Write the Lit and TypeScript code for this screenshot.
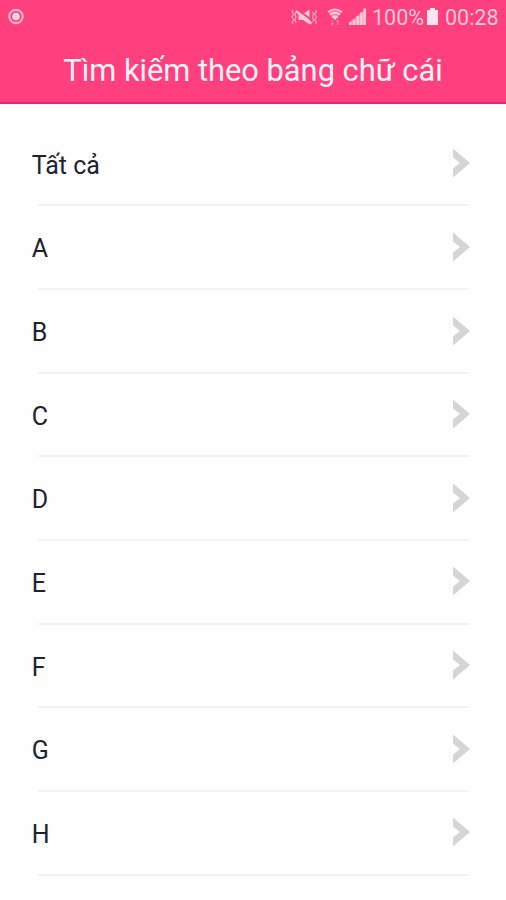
import { LitElement, html, css } from "lit";
import { customElement, property } from "lit/decorators.js";

@customElement("status-bar")
class StatusBar extends LitElement {
  static styles = css`
    :host {
      display: flex;
      align-items: center;
      height: 34px;
      color: #ffc8da;
      font-size: 21.5px;
      line-height: 34px;
    }
    svg { display: block; flex: none; }
    .record { margin-left: 7px; }
    .spacer { flex: 1; }
    .wifi { margin-left: 9px; }
    .signal { margin-left: 5px; }
    .percent { margin-left: 5px; width: 53px; }
    .battery { margin-left: 2px; }
    .clock { margin-left: 7px; width: 61px; }
    .label { display: block; white-space: nowrap; padding-top: 1px; }
  `;
  render() {
    return html`
      <svg class="record" width="18" height="18" viewBox="0 0 18 18">
        <circle cx="9" cy="8.5" r="6.7" fill="none" stroke="#ffb4ce" stroke-width="2.2" />
        <circle cx="9" cy="8.5" r="3.8" fill="#ffd0e0" />
      </svg>
      <div class="spacer"></div>
      <svg width="27" height="18" viewBox="0 0 27 18">
        <path d="M7.5 6H12l6.5-4.5v15L12 12H7.5z" fill="#ffc8da" />
        <path d="M6.5 1.5l14 10.5" stroke="#ff3f7e" stroke-width="1.8" />
        <path d="M5 3l15.5 12.5" stroke="#ffc8da" stroke-width="2.6" />
        <path d="M2 2l-1 2 2 2-2 3 2 3-2 2 1 2M5 4l-1 2 1 3-1 3 1 3M21.5 4l1 2-1 3 1 3-1 2M24.5 2l1 2-2 2 2 3-2 3 2 2-1 2" fill="none" stroke="#ffa0c0" stroke-width="1.2" />
      </svg>
      <svg class="wifi" width="16" height="18" viewBox="0 0 16 18">
        <path d="M1 4Q8-2 15 4L8.8 11.6H7.2z" fill="#ff80aa" />
        <path d="M1 3.8Q8-1.2 15 3.8M2.8 6.6Q8 3.2 13.2 6.6M5 9.3Q8 7.4 11 9.3" fill="none" stroke="#ffd0e0" stroke-width="1.6" />
        <path d="M5.5 9h5L8 12z" fill="#ffc8da" />
        <path d="M5.2 12v5M3.8 15l1.4 2 1.4-2M10.8 17v-5M9.4 14l1.4-2 1.4 2" fill="none" stroke="#ff80aa" stroke-width="1.1" />
      </svg>
      <svg class="signal" width="19" height="18" viewBox="0 0 19 18">
        <path d="M1 17v-2.5L17.5 1v16z" fill="#ff80aa" />
        <path d="M1 14h2.6v3H1zM4.6 11.5h3V17h-3zM8.4 8h3v9h-3zM12 4.5h2.8V17H12zM15.4 0.5h2.6V17h-2.6z" fill="#ffc8da" />
      </svg>
      <div class="percent"><span class="label">100%</span></div>
      <svg class="battery" width="11" height="18" viewBox="0 0 11 18">
        <path d="M3 0h5v2h3v15H0V2h3z" fill="#ffe6ee" />
      </svg>
      <div class="clock"><span class="label">00:28</span></div>
    `;
  }
}

@customElement("letter-row")
class LetterRow extends LitElement {
  @property() label = "";
  static styles = css`
    :host { display: block; height: 83.67px; }
    .row {
      box-sizing: border-box;
      height: 81.67px;
      display: flex;
      align-items: center;
      justify-content: space-between;
      padding: 4.4px 36px 0 31.7px;
      color: #20232f;
      font-size: 25px;
      line-height: 30px;
    }
    .line { height: 2px; margin: 0 37.5px 0 38px; background: #f2f2f2; }
    svg { display: block; margin-top: -5px; }
  `;
  render() {
    return html`
      <div class="row">
        <span>${this.label}</span>
        <svg width="17" height="30" viewBox="0 0 17 30">
          <path d="M0 0.5L17 15 0 29.5V20.5L7 15 0 9.5Z" fill="#d5d5d5" />
        </svg>
      </div>
      <div class="line"></div>
    `;
  }
}

@customElement("app-root")
class AppRoot extends LitElement {
  static styles = css`
    :host {
      display: block;
      height: 900px;
      overflow: hidden;
      background: #fefefe;
      font-family: Roboto, "Noto Sans", sans-serif;
    }
    .header {
      box-sizing: border-box;
      height: 104px;
      background: #ff3f7e;
      border-bottom: 2px solid #fb1a72;
    }
    .title {
      margin: 0;
      font-size: 30.8px;
      font-weight: 400;
      line-height: 74px;
      text-align: center;
      color: #fff2f6;
      white-space: nowrap;
    }
    .list { padding-top: 18.7px; }
  `;
  render() {
    const labels = ["Tất cả", "A", "B", "C", "D", "E", "F", "G", "H"];
    return html`
      <div class="header">
        <status-bar></status-bar>
        <h1 class="title">Tìm kiếm theo bảng chữ cái</h1>
      </div>
      <div class="list">
        ${labels.map((l) => html`<letter-row .label=${l}></letter-row>`)}
      </div>
    `;
  }
}
